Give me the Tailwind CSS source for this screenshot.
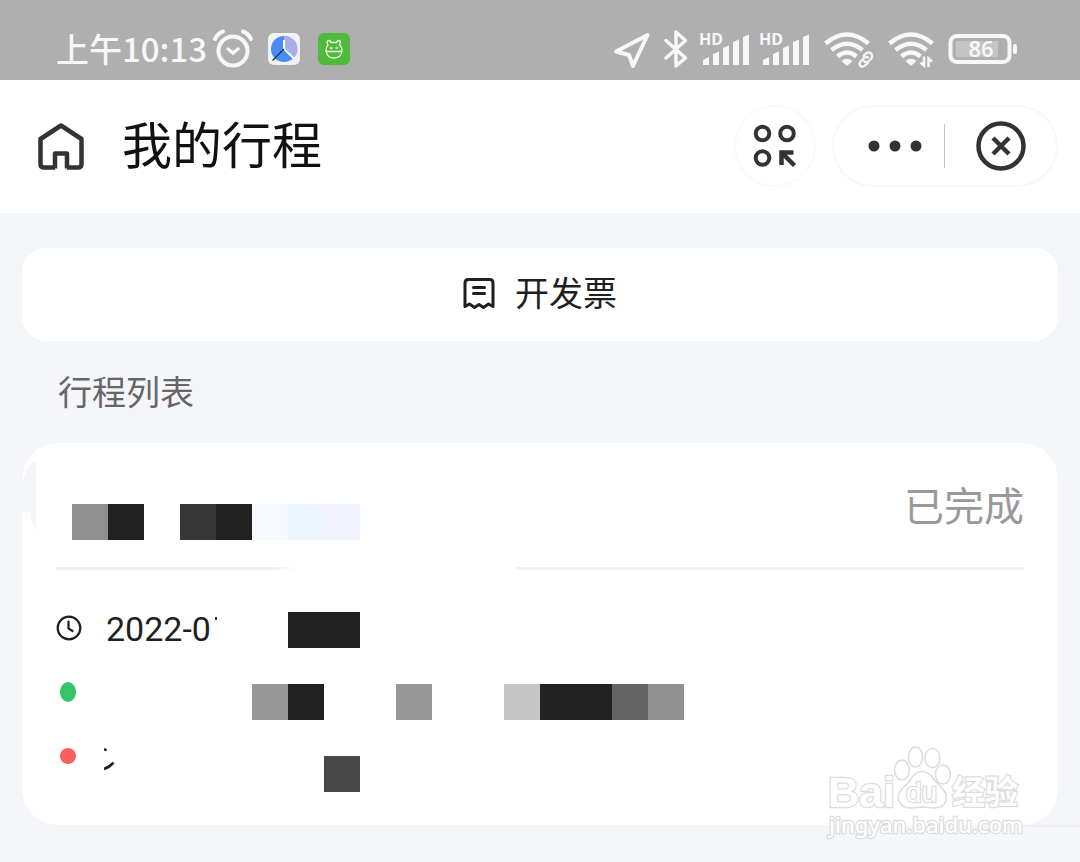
<!DOCTYPE html>
<html lang="zh-CN">
<head>
<meta charset="UTF-8" />
<meta name="viewport" content="width=device-width, initial-scale=1.0" />
<title>我的行程</title>

<script src="https://cdn.jsdelivr.net/npm/@tailwindcss/browser@4"></script>

<style>
    body {
      font-family: Roboto, 'Noto Sans CJK SC', sans-serif;
    }

    .cjk {
      font-family: 'Noto Sans CJK SC', sans-serif;
    }
  </style>
</head>

<body class="relative min-h-screen bg-[#f5f6fa] text-[#1f1f1f]">
  <!-- Status bar -->
  <div class="flex h-20 items-center justify-between bg-[#afafaf] pt-6 pr-[62px] pb-1 pl-14 text-[#f7f7f7]">
    <div class="flex items-center">
      <span class="cjk pb-1 text-[33px] leading-[48px] font-medium">上午10:13</span>
      <!-- Alarm -->
      <svg class="mb-0.5 ml-1 h-10 w-11" viewBox="0 0 44 40" fill="none" stroke="currentColor" stroke-width="4" stroke-linecap="round">
        <circle cx="22" cy="22" r="14.5" />
        <path d="M4 10Q7 4 12 2.500M40 10Q37 4 32 2.500" />
        <path d="M17 20l5 4 5-4" stroke-width="3.500" />
      </svg>
      <!-- Clock app -->
      <svg class="mb-0.5 ml-[13px] size-8" viewBox="0 0 32 32">
        <rect width="32" height="32" rx="6" fill="#f0f2f6" />
        <circle cx="16" cy="16" r="13" fill="#4a8df2" />
        <path d="M16 3A13 13 0 0 1 25.500 25.500L16 16z" fill="#a9aee8" />
        <path d="M16 7v9l10 9.500" fill="none" stroke="#fff" stroke-width="2" />
        <path d="M16 16L4.500 27.500" stroke="#1d2c55" stroke-width="1.200" />
      </svg>
      <!-- Green app -->
      <svg class="mb-0.5 ml-[18px] size-8" viewBox="0 0 32 32" fill="none" stroke="#eaffe0" stroke-width="1.300">
        <rect width="32" height="32" rx="6" fill="#4fba3b" stroke="none" />
        <path d="M10 12Q8 8 10.500 7.500Q12.500 7.500 13 9.500H18.500Q19 7.500 21 7.500Q23.500 8 21.500 12Q24 14 24 18Q23 25 16 25Q9 25 8 18Q8 14 10 12zM8 18.500H24M12 15h2.500M17.500 15h2.500" />
      </svg>
    </div>

    <div class="flex items-center gap-2">
      <!-- Location -->
      <svg class="h-11 w-[42px]" viewBox="0 0 42 44" fill="none" stroke="currentColor" stroke-width="4" stroke-linejoin="round">
        <path d="M35.500 7L4 23.500L17 27L21 38z" />
      </svg>
      <!-- Bluetooth -->
      <svg class="h-11 w-7" viewBox="0 0 28 44" fill="none" stroke="currentColor" stroke-width="3.500" stroke-linejoin="round" stroke-linecap="round">
        <path d="M4 12.500L23.500 30L14 38V4L23.500 12.500L4 30" />
      </svg>
      <!-- Signal, SIM 1 -->
      <svg class="h-11 w-[52px]" viewBox="0 0 52 44" fill="currentColor">
        <text x="1" y="17" font-family="Noto Sans" font-size="16" font-weight="700">HD</text>
        <path d="M5 37V32L11 29V37zM15 37V26L21 23.500V37zM25 37V20L31 17.500V37zM35 37V14L41 11.500V37zM45 37V9L51 6.500V37z" />
      </svg>
      <!-- Signal, SIM 2 -->
      <svg class="h-11 w-[52px]" viewBox="0 0 52 44" fill="currentColor">
        <text x="1" y="17" font-family="Noto Sans" font-size="16" font-weight="700">HD</text>
        <path d="M5 37V32L11 29V37zM15 37V26L21 23.500V37zM25 37V20L31 17.500V37zM35 37V14L41 11.500V37zM45 37V9L51 6.500V37z" />
      </svg>
      <!-- Linked wifi -->
      <svg class="h-11 w-[60px]" viewBox="0 0 60 44" fill="none" stroke="currentColor" stroke-width="4.500">
        <path d="M7.500 15.500Q29 -2.500 50.500 15.500M13.500 22Q29 9.500 44.500 22M19.500 28.500Q29 20.500 38.500 28.500" />
        <path d="M23.500 33Q29 28.500 34.500 33L29 38z" fill="currentColor" stroke="none" />
        <g stroke-width="2.200" stroke-linecap="round">
          <path d="M45.500 28L48.500 25Q51.500 23.500 53.500 26Q55 28.500 53 31L49.500 34Q47.500 35 46 33" />
          <path d="M50 29.500Q48 28 46 30L42.500 33.500Q40.500 36 42.500 38Q44.500 39.500 47 37.500L50 35" />
        </g>
      </svg>
      <!-- Wifi -->
      <svg class="h-11 w-[52px]" viewBox="0 0 52 44" fill="none" stroke="currentColor" stroke-width="4.500">
        <path d="M3.500 15.500Q25 -2.500 46.500 15.500M9.500 22Q25 9.500 40.500 22M15.500 28.500Q25 20.500 34.500 28.500" />
        <path d="M19.500 33Q25 28.500 30.500 33L25 38z" fill="currentColor" stroke="none" />
        <path d="M38 28.500V37.500L34.500 34.500M42.500 39V30.500L46 33.500" stroke-width="2.500" />
      </svg>
      <!-- Battery -->
      <svg class="h-11 w-[72px]" viewBox="0 0 72 44" fill="none">
        <rect x="4.500" y="8" width="59" height="26" rx="6.500" stroke="currentColor" stroke-width="4" />
        <rect x="10" y="13" width="42" height="16" fill="#c4c4c4" />
        <rect x="67" y="16" width="4" height="10" rx="2" fill="currentColor" />
        <text x="35" y="29" text-anchor="middle" font-family="Noto Sans" font-size="22" font-weight="600" fill="currentColor">86</text>
      </svg>
    </div>
  </div>

  <!-- Page header -->
  <header class="flex h-[133px] items-center justify-between bg-white pr-[22px] pb-0.5 pl-9">
    <div class="flex items-center gap-9">
      <a href="#" aria-label="首页">
        <svg class="size-[50px]" viewBox="0 0 50 50" fill="none" stroke="#333" stroke-width="4.500" stroke-linejoin="round">
          <path d="M19 47.500V32.500H31V47.500M19 46.500H8Q4.500 46.500 4.500 43V18L25 4.500L45.500 18V43Q45.500 46.500 42 46.500H31" />
        </svg>
      </a>
      <h1 class="cjk pb-2 text-[50px] leading-[72px] text-[#111]">我的行程</h1>
    </div>
    <div class="flex items-center gap-4">
      <button type="button" aria-label="小程序" class="flex size-[82px] items-center justify-center rounded-full border-2 border-[#fafafa]">
        <svg class="size-11" viewBox="0 0 44 44" fill="none" stroke="#333" stroke-width="4">
          <circle cx="9.500" cy="9.500" r="6.800" />
          <circle cx="34" cy="9.500" r="6.800" />
          <circle cx="9.500" cy="34" r="6.800" />
          <path d="M41.500 41.500L29 29M28.500 41V28.500H40.500" stroke-width="4.500" />
        </svg>
      </button>
      <div class="flex h-[82px] w-[226px] items-center rounded-full border-2 border-[#f8f8f8]">
        <button type="button" aria-label="更多" class="flex h-full flex-1 items-center justify-end pr-[22px]">
          <svg class="h-3 w-[54px]" viewBox="0 0 54 12" fill="#333">
            <circle cx="6" cy="6" r="5.500" />
            <circle cx="27" cy="6" r="5.500" />
            <circle cx="48" cy="6" r="5.500" />
          </svg>
        </button>
        <span class="h-11 w-px bg-[#c4c4c4]"></span>
        <button type="button" aria-label="关闭" class="flex h-full w-[111px] items-center justify-center">
          <svg class="size-[50px]" viewBox="0 0 50 50" fill="none" stroke="#333" stroke-width="4.500">
            <circle cx="25" cy="25" r="22.500" />
            <path d="M17 17L33 33M33 17L17 33" />
          </svg>
        </button>
      </div>
    </div>
  </header>

  <main class="px-[22px] pt-[35px]">
    <button type="button" class="flex h-[93px] w-full items-center justify-center gap-5 rounded-3xl bg-white pb-0.5">
      <svg class="size-8" viewBox="0 0 32 32" fill="none" stroke="#1f1f1f" stroke-width="3" stroke-linejoin="round" stroke-linecap="round">
        <path d="M2 28.500V5Q2 1.500 5.500 1.500H26.500Q30 1.500 30 5V28.500L25.500 26L20.500 29.500L16 26.500L11.500 29.500L6.500 26z" />
        <path d="M10.500 9.500H21.500M10.500 15.500H21.500" />
      </svg>
      <span class="cjk pb-1 text-[34px] leading-[50px]">开发票</span>
    </button>

    <h2 class="cjk pt-[25px] pb-[27px] pl-9 text-[34px] leading-[50px] text-[#666]">行程列表</h2>

    <!-- Trip card -->
    <section class="relative h-[382px] rounded-[36px] bg-white px-[34px]">
      <!-- Smudge on the left edge -->
      <svg class="absolute top-0 left-0 h-24 w-4" viewBox="0 0 16 96">
        <path d="M3 32Q6 20 14 18V88Q8 78 8 69H0V44Q0 38 3 32z" fill="#f5f6fa" />
      </svg>

      <div class="flex h-[124px] items-center justify-between">
        <div class="flex pt-[34px] pl-4">
          <span class="size-9 bg-[#8f8f8f]"></span>
          <span class="size-9 bg-[#212121]"></span>
          <span class="ml-9 size-9 bg-[#373737]"></span>
          <span class="size-9 bg-[#212121]"></span>
          <span class="size-9 bg-[#f6faff]"></span>
          <span class="size-9 bg-[#ecf4fe]"></span>
          <span class="size-9 bg-[#f0f3fe]"></span>
        </div>
        <span class="cjk pb-0.5 text-[40px] leading-[56px] text-[#999]">已完成</span>
      </div>

      <div class="flex justify-between">
        <span class="h-[3px] w-[240px] bg-linear-to-r from-[#f1efed] from-90% to-white"></span>
        <span class="h-[3px] w-[508px] bg-[#f1f1f1]"></span>
      </div>

      <div class="flex flex-col gap-9 pt-[42px]">
        <!-- Date -->
        <div class="flex h-9 items-center">
          <svg class="mb-1 size-[26px]" viewBox="0 0 26 26" fill="none" stroke="#1f1f1f" stroke-width="2.200" stroke-linecap="round">
            <circle cx="13" cy="13" r="11.300" />
            <path d="M12.500 6.500V13.500L16.500 16" />
          </svg>
          <div class="mb-0.5 ml-6 flex w-28 justify-between">
            <span class="text-[34px] leading-9 whitespace-nowrap">2022-0</span>
            <svg class="h-9 w-[3px]" viewBox="0 0 3 36">
              <path d="M0 6H2V9H0z" fill="#1f1f1f" />
            </svg>
          </div>
          <span class="ml-[70px] h-9 w-[72px] bg-[#212121]"></span>
        </div>
        <!-- Start -->
        <div class="flex h-9 pl-1">
          <span class="-mt-0.5 h-5 w-4 rounded-[50%] bg-[#37c367]"></span>
          <span class="ml-44 size-9 bg-[#969696]"></span>
          <span class="size-9 bg-[#212121]"></span>
          <span class="ml-[72px] size-9 bg-[#969696]"></span>
          <span class="ml-[72px] size-9 bg-[#c6c6c6]"></span>
          <span class="h-9 w-[72px] bg-[#212121]"></span>
          <span class="size-9 bg-[#646464]"></span>
          <span class="size-9 bg-[#8f8f8f]"></span>
        </div>
        <!-- Destination -->
        <div class="-mt-2 flex h-11 pl-1">
          <span class="size-4 rounded-full bg-[#fb5f5f]"></span>
          <svg class="ml-7 h-6 w-3" viewBox="0 0 12 24" fill="none" stroke="#1f1f1f">
            <path d="M0 1L2.500 2.500" stroke-width="2.500" />
            <path d="M0 21Q6 19 9.500 14.500" stroke-width="2.800" />
          </svg>
          <span class="mt-2 ml-52 size-9 bg-[#484848]"></span>
        </div>
      </div>
    </section>
  </main>

  <!-- Watermark -->
  <svg class="absolute top-[742px] right-0 h-[100px] w-[260px]" viewBox="0 0 260 100" fill="#fff" stroke="#dcdcdc" stroke-width="2.500" paint-order="stroke">
    <path d="M202 84H260" stroke="#f3dfe6" stroke-width="1" />
    <text x="8" y="65" font-family="Liberation Sans" font-size="43" font-weight="700">Bai</text>
    <g stroke-width="1.500" paint-order="normal">
      <ellipse cx="82" cy="28" rx="7.500" ry="10" />
      <ellipse cx="95.500" cy="15" rx="7" ry="10" />
      <ellipse cx="112.500" cy="16" rx="7.500" ry="9.500" />
      <ellipse cx="123" cy="32.500" rx="7.500" ry="9.500" />
      <path d="M102 29.500Q108 29.500 113 36Q117 41 122 46Q128 52 126 59Q123 66 114 66L102 65L91 66Q81 66 78.500 58Q77 51 84 45Q89 41 91.500 36Q96 29.500 102 29.500z" />
    </g>
    <text x="86" y="60" font-family="Liberation Sans" font-size="28">du</text>
    <text x="132" y="62" font-family="Noto Sans CJK SC" font-size="33" font-weight="700">经验</text>
    <text x="9" y="91" font-family="Noto Sans" font-size="22" font-weight="500">jingyan.baidu.com</text>
  </svg>
</body>
</html>
